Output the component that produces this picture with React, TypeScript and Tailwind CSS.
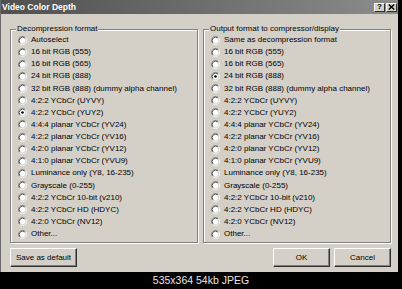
import React from "react";

const rest = [
  "16 bit RGB (555)",
  "16 bit RGB (565)",
  "24 bit RGB (888)",
  "32 bit RGB (888) (dummy alpha channel)",
  "4:2:2 YCbCr (UYVY)",
  "4:2:2 YCbCr (YUY2)",
  "4:4:4 planar YCbCr (YV24)",
  "4:2:2 planar YCbCr (YV16)",
  "4:2:0 planar YCbCr (YV12)",
  "4:1:0 planar YCbCr (YVU9)",
  "Luminance only (Y8, 16-235)",
  "Grayscale (0-255)",
  "4:2:2 YCbCr 10-bit (v210)",
  "4:2:2 YCbCr HD (HDYC)",
  "4:2:0 YCbCr (NV12)",
  "Other...",
];

function Radio({ checked }: { checked: boolean }) {
  return (
    <svg width="9" height="9" viewBox="0 0 12 12" className="shrink-0">
      <circle cx="6" cy="6" r="4.2" fill="#fff" />
      <path d="M2.11 9.89 A5.5 5.5 0 0 1 9.89 2.11" fill="none" stroke="#808080" strokeWidth="1" />
      <path d="M9.89 2.11 A5.5 5.5 0 0 1 2.11 9.89" fill="none" stroke="#ffffff" strokeWidth="1" />
      <path d="M2.82 9.18 A4.5 4.5 0 0 1 9.18 2.82" fill="none" stroke="#303030" strokeWidth="1" />
      <path d="M9.18 2.82 A4.5 4.5 0 0 1 2.82 9.18" fill="none" stroke="#d4d0c8" strokeWidth="1" />
      {checked && <circle cx="6" cy="6" r="1.7" fill="#000" />}
    </svg>
  );
}

function Group({ title, first, checked }: { title: string; first: string; checked: number }) {
  const items = [first, ...rest];
  return (
    <div className="flex-1 flex flex-col border border-[#808080] shadow-[inset_1px_1px_0_#fff,1px_1px_0_#fff] pl-[7px] pb-[2px]">
      <div className="-mt-[6px] -ml-[2px] self-start bg-[#d4d0c8] px-[1px] h-[10px] leading-[10px] text-[8px] text-black whitespace-nowrap">
        {title}
      </div>
      <div className="flex flex-col">
        {items.map((t, i) => (
          <div key={i} className="h-[12.125px] flex items-center gap-[4px]">
            <Radio checked={i === checked} />
            <span className="text-[8px] leading-none text-black whitespace-nowrap">{t}</span>
          </div>
        ))}
      </div>
    </div>
  );
}

function Button({ children, w }: { children: React.ReactNode; w: string }) {
  return (
    <div
      className={`${w} h-[19px] flex items-center justify-center border border-t-white border-l-white border-b-[#303030] border-r-[#303030] shadow-[inset_-1px_-1px_0_#808080] text-[8px] text-black leading-none`}
    >
      {children}
    </div>
  );
}

function TitleBtn({ children }: { children: React.ReactNode }) {
  return (
    <div className="w-[11px] h-[9px] flex items-center justify-center bg-[#d4d0c8] border border-t-white border-l-white border-b-[#303030] border-r-[#303030] text-[8px] font-bold text-black leading-none">
      {children}
    </div>
  );
}

export default function App() {
  return (
    <div className="w-[402px] h-[289px] bg-black flex flex-col overflow-hidden font-['Liberation_Sans',Arial,sans-serif]">
      <div className="w-[398px] h-[272px] shrink-0 flex flex-col bg-[#d4d0c8] border-l border-[#6a6a6a]">
        <div className="h-[14px] shrink-0 flex items-center bg-gradient-to-r from-[#505050] to-[#8c8c8c] pl-[1px] pr-[1px]">
          <span className="text-white font-bold text-[8.5px] leading-none">Video Color Depth</span>
          <div className="ml-auto flex gap-[1px]">
            <TitleBtn>?</TitleBtn>
            <TitleBtn>
              <svg width="7" height="6" viewBox="0 0 7 6">
                <path d="M0.8 0.5 L6.2 5.5 M6.2 0.5 L0.8 5.5" stroke="#000" strokeWidth="1.4" />
              </svg>
            </TitleBtn>
          </div>
        </div>
        <div className="flex-1 flex flex-col pl-[9px] pr-[7px] pt-[15px] pb-[5px]">
          <div className="flex gap-[5px]">
            <Group title="Decompression format" first="Autoselect" checked={6} />
            <Group title="Output format to compressor/display" first="Same as decompression format" checked={3} />
          </div>
          <div className="mt-[5px] flex items-start">
            <Button w="w-[67px]">Save as default</Button>
            <div className="ml-auto flex gap-[4px]">
              <Button w="w-[57px]">OK</Button>
              <Button w="w-[57px]">Cancel</Button>
            </div>
          </div>
        </div>
      </div>
      <div className="flex-1 flex items-center justify-center text-[#e6e6e6] text-[10.5px] leading-none">
        535x364 54kb JPEG
      </div>
    </div>
  );
}
